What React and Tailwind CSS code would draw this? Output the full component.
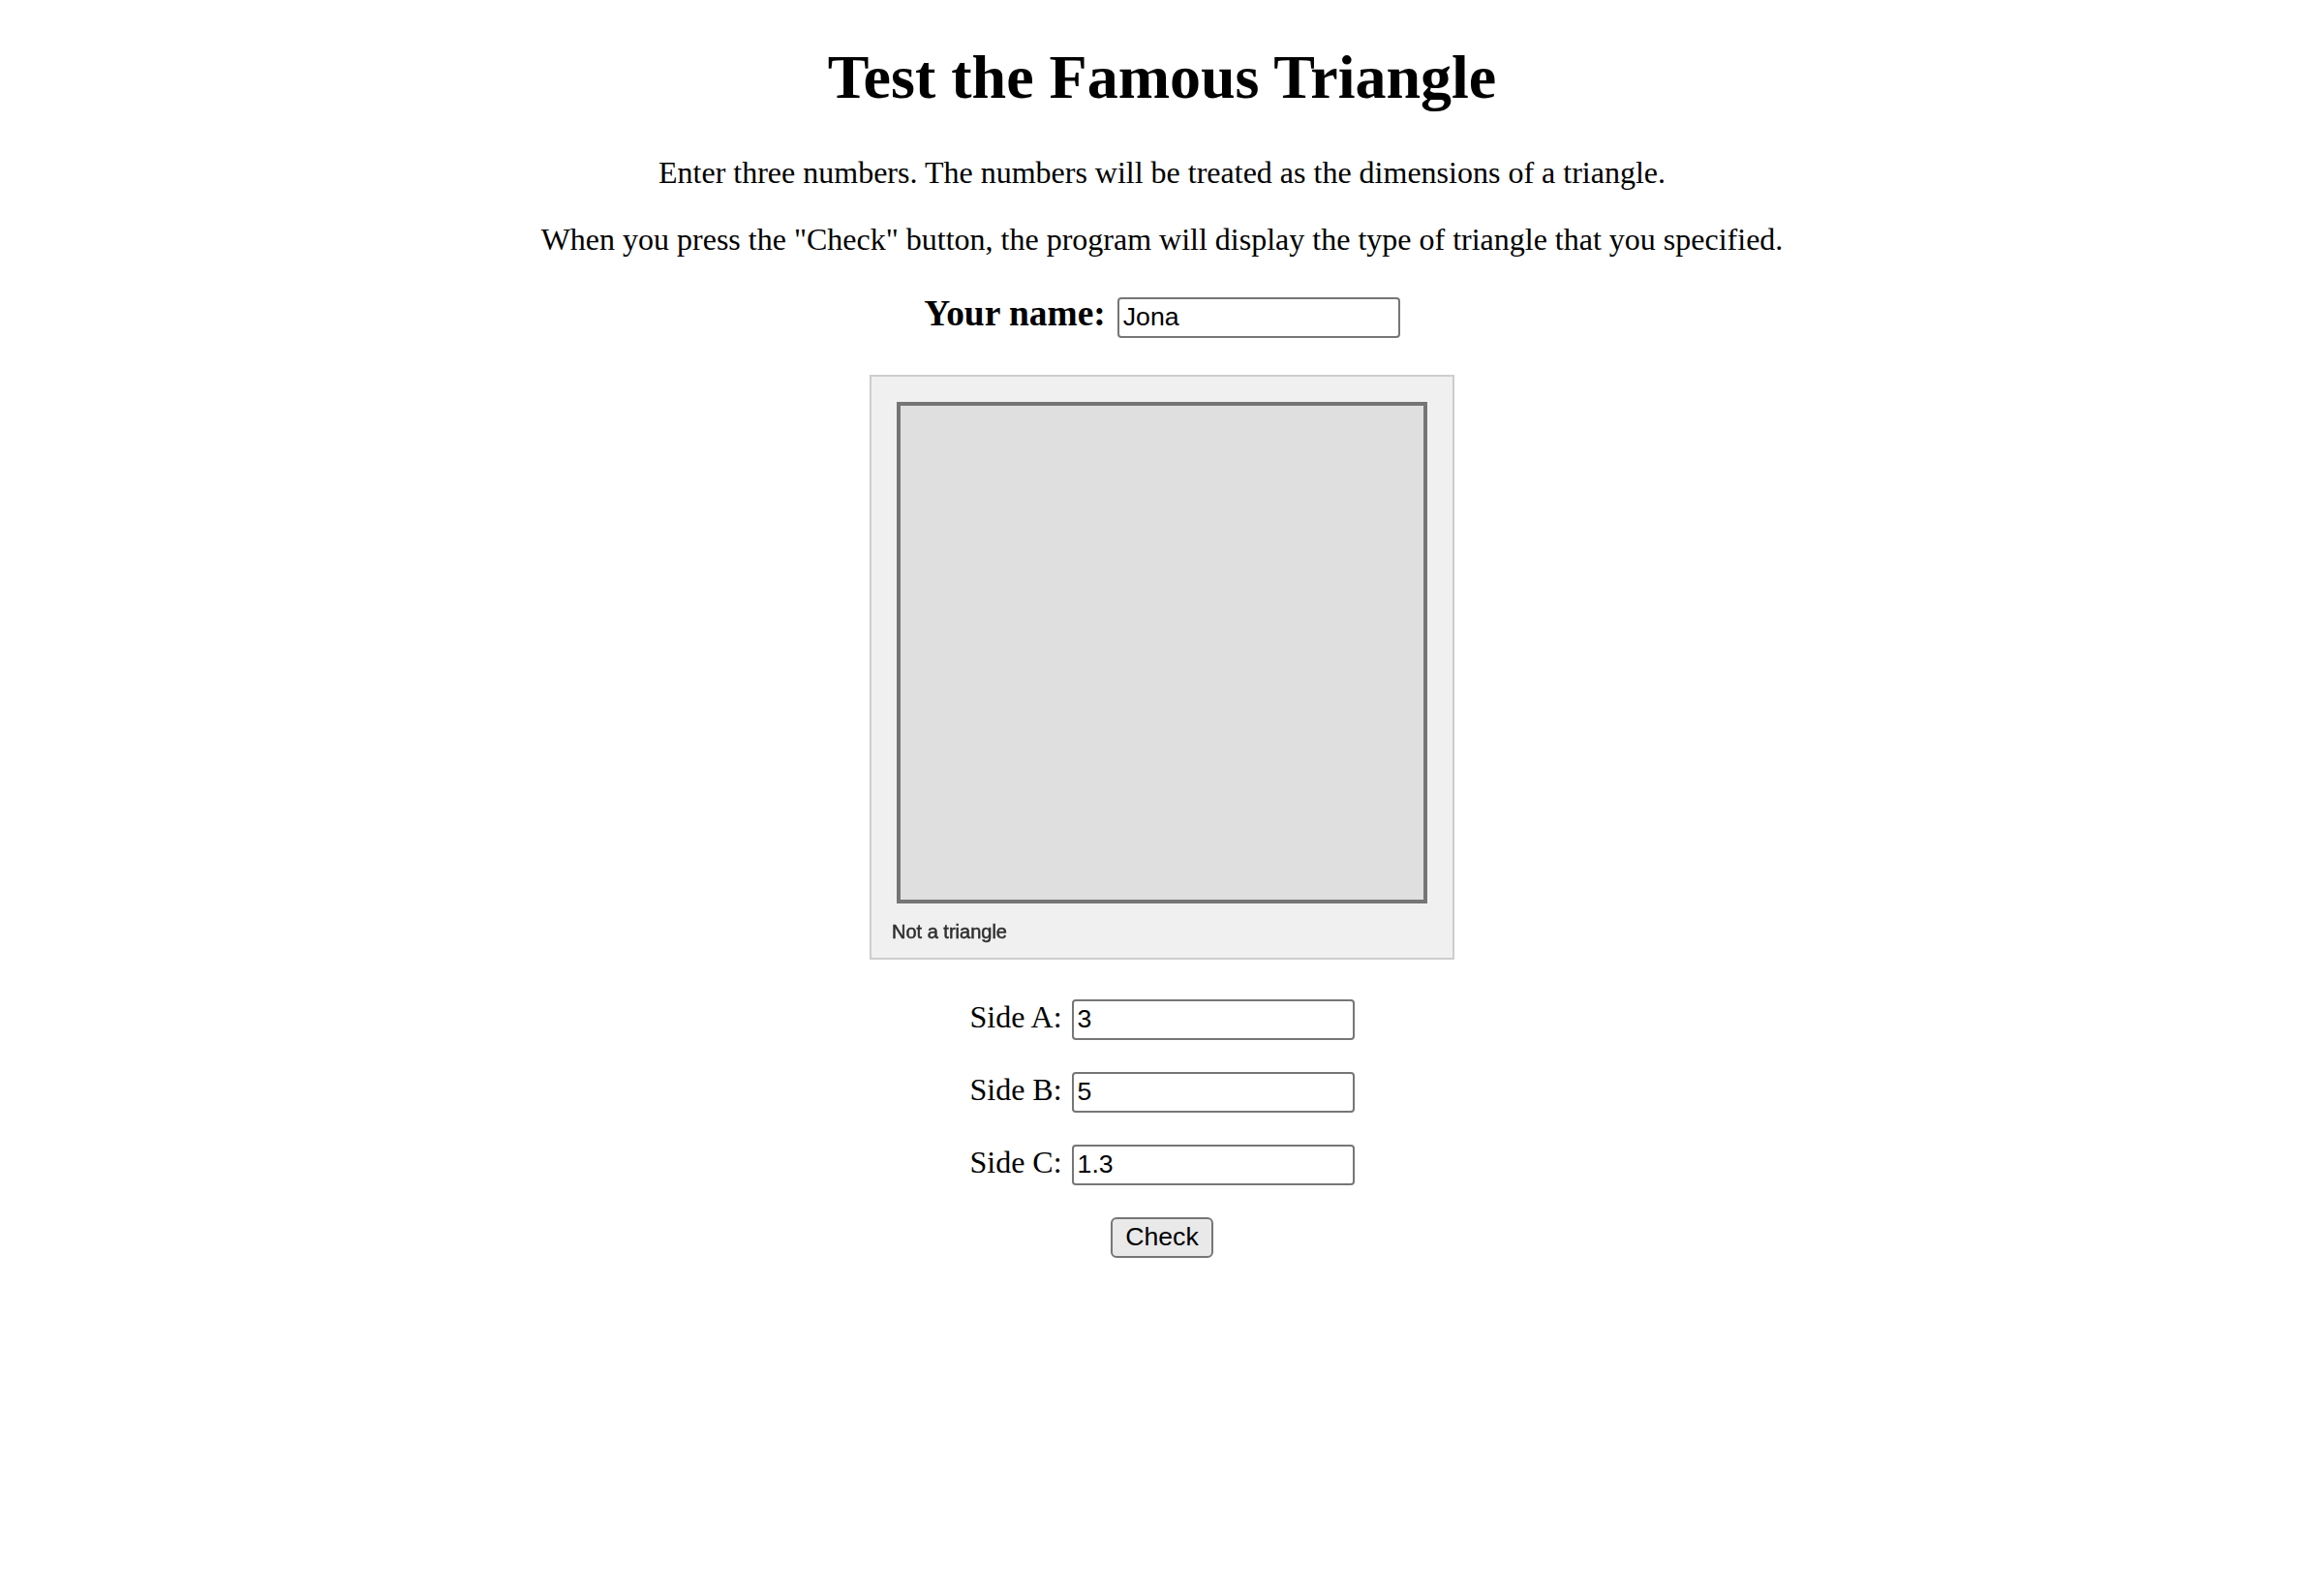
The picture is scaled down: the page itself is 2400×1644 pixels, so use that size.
import React from "react";

function Row({ label, value, first }) {
  return (
    <div className={"flex items-baseline justify-center gap-[10px] h-[42px] " + (first ? "mt-[41px]" : "mt-[33px]")}>
      <span className="text-[32px] leading-[normal]">{label}</span>
      <input
        type="text"
        defaultValue={value}
        className="w-[292px] h-[42px] border-2 border-[#767676] rounded-[4px] px-[4px] text-[26.67px] leading-[normal] font-['Liberation_Sans',Arial,sans-serif] text-black bg-white outline-none"
      />
    </div>
  );
}

export default function App() {
  return (
    <div className="min-h-screen bg-white text-black text-center font-['Liberation_Serif','Times_New_Roman',serif]">
      <h1 className="pt-[43px] text-[64px] font-bold leading-[normal]">
        Test the Famous Triangle
      </h1>
      <p className="mt-[43px] text-[32px] leading-[normal]">
        Enter three numbers. The numbers will be treated as the dimensions of a triangle.
      </p>
      <p className="mt-[32px] text-[32px] leading-[normal]">
        When you press the "Check" button, the program will display the type of triangle that you specified.
      </p>
      <div className="mt-[36px] flex items-baseline justify-center gap-[12px]">
        <span className="text-[37.44px] font-bold leading-[normal]">Your name:</span>
        <input
          type="text"
          defaultValue="Jona"
          className="w-[292px] h-[42px] border-2 border-[#767676] rounded-[4px] px-[4px] text-[26.67px] leading-[normal] font-['Liberation_Sans',Arial,sans-serif] text-black bg-white outline-none"
        />
      </div>
      <div className="mt-[38px] flex justify-center">
        <div className="w-[604px] h-[604px] border-2 border-[#cdcdcd] bg-[#f0f0f0]">
          <svg width="600" height="600" viewBox="0 0 600 600" className="block blur-[0.6px]">
            <rect x="28" y="28" width="544" height="514" fill="#dfdfdf" stroke="#757575" strokeWidth="4" />
            <text
              x="21"
              y="580"
              fontSize="20"
              fill="#2f2f2f"
              stroke="#2f2f2f"
              strokeWidth="0.5"
              fontFamily="'Liberation Sans', Arial, sans-serif"
              textAnchor="start"
            >
              Not a triangle
            </text>
          </svg>
        </div>
      </div>
      <div>
        <Row label="Side A:" value="3" first />
        <Row label="Side B:" value="5" />
        <Row label="Side C:" value="1.3" />
        <div className="flex justify-center mt-[33px]">
          <button
            type="button"
            className="w-[106px] h-[42px] border-2 border-[#767676] rounded-[6px] bg-[#e9e9e9] text-[26.67px] leading-[normal] font-['Liberation_Sans',Arial,sans-serif] text-black"
          >
            Check
          </button>
        </div>
      </div>
    </div>
  );
}
